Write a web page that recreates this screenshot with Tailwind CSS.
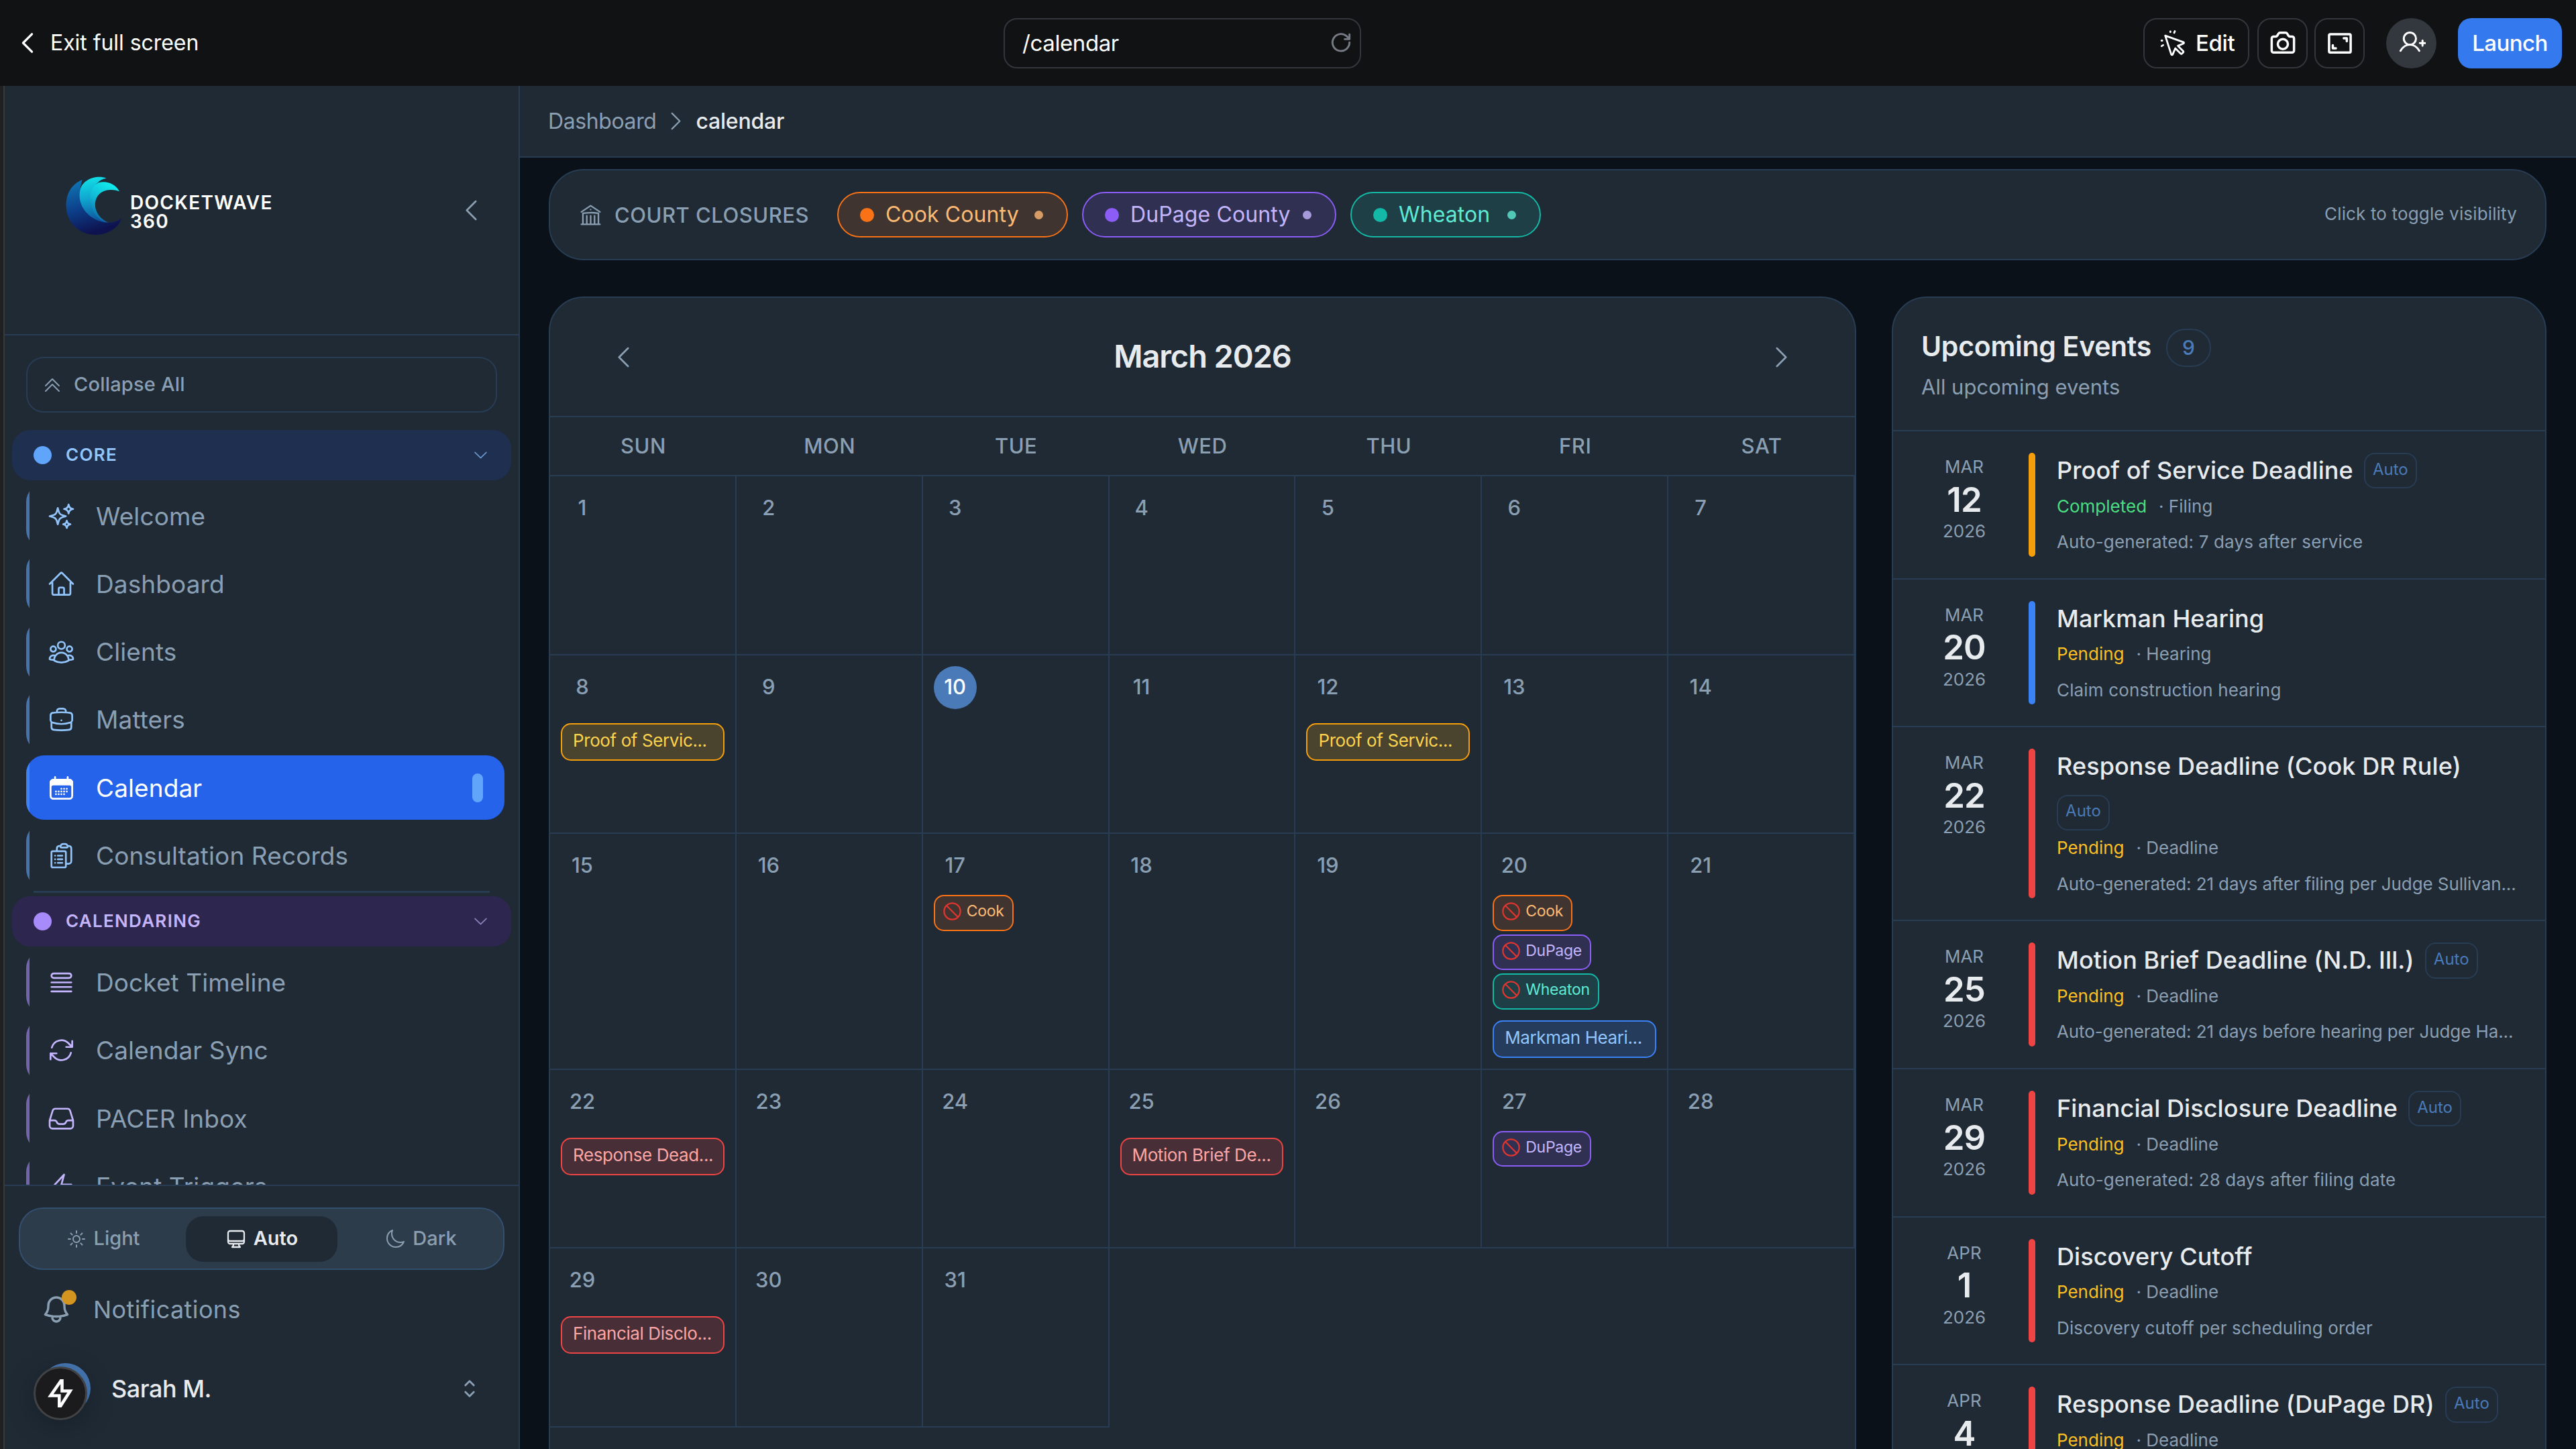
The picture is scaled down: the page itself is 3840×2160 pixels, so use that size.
<!DOCTYPE html>
<html lang="en">
<head>
    <meta charset="UTF-8">
    <meta name="viewport" content="width=device-width, initial-scale=1.0">
    <title>DocketWave 360 - Calendar</title>
    <script src="https://cdn.jsdelivr.net/npm/@tailwindcss/browser@4"></script>
</head>
<body class="w-[3840px] h-[2160px] overflow-hidden flex flex-col bg-[#101213] font-['Inter','DejaVu_Sans',sans-serif] text-[#e8ebee] leading-none">

    <!-- Icon set -->
    <svg class="hidden">
        <symbol id="i-left" viewBox="0 0 24 24"><path d="M15.75 19.5 8.25 12l7.5-7.5"/></symbol>
        <symbol id="i-right" viewBox="0 0 24 24"><path d="m8.25 4.5 7.5 7.5-7.5 7.5"/></symbol>
        <symbol id="i-down" viewBox="0 0 24 24"><path d="m19.5 8.25-7.5 7.5-7.5-7.5"/></symbol>
        <symbol id="i-double-up" viewBox="0 0 24 24"><path d="m4.5 18.75 7.5-7.5 7.5 7.5M4.5 12.75l7.5-7.5 7.5 7.5"/></symbol>
        <symbol id="i-updown" viewBox="0 0 24 24"><path d="M8.25 15 12 18.75 15.75 15m-7.5-6L12 5.25 15.75 9"/></symbol>
        <symbol id="i-sparkles" viewBox="0 0 24 24"><path d="M9.813 15.904 9 18.75l-.813-2.846a4.5 4.5 0 0 0-3.09-3.09L2.25 12l2.846-.813a4.5 4.5 0 0 0 3.09-3.09L9 5.25l.813 2.846a4.5 4.5 0 0 0 3.09 3.09L15.75 12l-2.846.813a4.5 4.5 0 0 0-3.09 3.09ZM18.259 8.715 18 9.75l-.259-1.035a3.375 3.375 0 0 0-2.455-2.456L14.25 6l1.036-.259a3.375 3.375 0 0 0 2.455-2.456L18 2.25l.259 1.035a3.375 3.375 0 0 0 2.456 2.456L21.75 6l-1.035.259a3.375 3.375 0 0 0-2.456 2.456ZM16.894 20.567 16.5 21.75l-.394-1.183a2.25 2.25 0 0 0-1.423-1.423L13.5 18.75l1.183-.394a2.25 2.25 0 0 0 1.423-1.423l.394-1.183.394 1.183a2.25 2.25 0 0 0 1.423 1.423l1.183.394-1.183.394a2.25 2.25 0 0 0-1.423 1.423Z"/></symbol>
        <symbol id="i-home" viewBox="0 0 24 24"><path d="m2.25 12 8.954-8.955c.44-.439 1.152-.439 1.591 0L21.75 12M4.5 9.75v10.125c0 .621.504 1.125 1.125 1.125H9.75v-4.875c0-.621.504-1.125 1.125-1.125h2.25c.621 0 1.125.504 1.125 1.125V21h4.125c.621 0 1.125-.504 1.125-1.125V9.75M8.25 21h8.25"/></symbol>
        <symbol id="i-group" viewBox="0 0 24 24"><path d="M18 18.72a9.094 9.094 0 0 0 3.741-.479 3 3 0 0 0-4.682-2.72m.94 3.198.001.031c0 .225-.012.447-.037.666A11.944 11.944 0 0 1 12 21c-2.17 0-4.207-.576-5.963-1.584A6.062 6.062 0 0 1 6 18.719m12 0a5.971 5.971 0 0 0-.941-3.197m0 0A5.995 5.995 0 0 0 12 12.75a5.995 5.995 0 0 0-5.058 2.772m0 0a3 3 0 0 0-4.681 2.72 8.986 8.986 0 0 0 3.74.477m.94-3.197a5.971 5.971 0 0 0-.94 3.197M15 6.75a3 3 0 1 1-6 0 3 3 0 0 1 6 0Zm6 3a2.25 2.25 0 1 1-4.5 0 2.25 2.25 0 0 1 4.5 0Zm-13.5 0a2.25 2.25 0 1 1-4.5 0 2.25 2.25 0 0 1 4.5 0Z"/></symbol>
        <symbol id="i-briefcase" viewBox="0 0 24 24"><path d="M20.25 14.15v4.25c0 1.094-.787 2.036-1.872 2.18-2.087.277-4.216.42-6.378.42s-4.291-.143-6.378-.42c-1.085-.144-1.872-1.086-1.872-2.18v-4.25m16.5 0a2.18 2.18 0 0 0 .75-1.661V8.706c0-1.081-.768-2.015-1.837-2.175a48.114 48.114 0 0 0-3.413-.387m4.5 8.006c-.194.165-.42.295-.673.38A23.978 23.978 0 0 1 12 15.75c-2.648 0-5.195-.429-7.577-1.22a2.016 2.016 0 0 1-.673-.38m0 0A2.18 2.18 0 0 1 3 12.489V8.706c0-1.081.768-2.015 1.837-2.175a48.111 48.111 0 0 1 3.413-.387m7.5 0V5.25A2.25 2.25 0 0 0 13.5 3h-3a2.25 2.25 0 0 0-2.25 2.25v.894m7.5 0a48.667 48.667 0 0 0-7.5 0M12 12.75h.008v.008H12v-.008Z"/></symbol>
        <symbol id="i-calendar" viewBox="0 0 24 24"><path fill="currentColor" d="M3 9.75V7.5a2.25 2.25 0 0 1 2.25-2.25h13.5A2.25 2.25 0 0 1 21 7.5v2.25L18.75 9H5.25Z"/><path d="M6.75 3v2.25M17.25 3v2.25M3 18.75V7.5a2.25 2.25 0 0 1 2.25-2.25h13.5A2.25 2.25 0 0 1 21 7.5v11.25m-18 0A2.25 2.25 0 0 0 5.25 21h13.5A2.25 2.25 0 0 0 21 18.75m-18 0v-7.5A2.25 2.25 0 0 1 5.25 9h13.5A2.25 2.25 0 0 1 21 11.25v7.5m-9-6h.008v.008H12v-.008ZM12 15h.008v.008H12V15Zm0 2.25h.008v.008H12v-.008ZM9.75 15h.008v.008H9.75V15Zm0 2.25h.008v.008H9.75v-.008ZM7.5 15h.008v.008H7.5V15Zm0 2.25h.008v.008H7.5v-.008Zm6.75-4.5h.008v.008h-.008v-.008Zm0 2.25h.008v.008h-.008V15Zm0 2.25h.008v.008h-.008v-.008Zm2.25-4.5h.008v.008H16.5v-.008Zm0 2.25h.008v.008H16.5V15Z"/></symbol>
        <symbol id="i-clipboard" viewBox="0 0 24 24"><path d="M9 12h3.75M9 15h3.75M9 18h3.75m3 .75H18a2.25 2.25 0 0 0 2.25-2.25V6.108c0-1.135-.845-2.098-1.976-2.192a48.424 48.424 0 0 0-1.123-.08m-5.801 0c-.065.21-.1.433-.1.664 0 .414.336.75.75.75h4.5a.75.75 0 0 0 .75-.75 2.25 2.25 0 0 0-.1-.664m-5.8 0A2.251 2.251 0 0 1 13.5 2.25H15c1.012 0 1.867.668 2.15 1.586m-5.8 0c-.376.023-.75.05-1.124.08C9.095 4.01 8.25 4.973 8.25 6.108V8.25m0 0H4.875c-.621 0-1.125.504-1.125 1.125v11.25c0 .621.504 1.125 1.125 1.125h9.75c.621 0 1.125-.504 1.125-1.125V9.375c0-.621-.504-1.125-1.125-1.125H8.25ZM6.75 12h.008v.008H6.75V12Zm0 3h.008v.008H6.75V15Zm0 3h.008v.008H6.75V18Z"/></symbol>
        <symbol id="i-queue" viewBox="0 0 24 24"><path d="M3.75 12h16.5m-16.5 3.75h16.5M3.75 19.5h16.5M5.625 4.5h12.75a1.875 1.875 0 0 1 0 3.75H5.625a1.875 1.875 0 0 1 0-3.75Z"/></symbol>
        <symbol id="i-sync" viewBox="0 0 24 24"><path d="M16.023 9.348h4.992v-.001M2.985 19.644v-4.992m0 0h4.992m-4.993 0 3.181 3.183a8.25 8.25 0 0 0 13.803-3.7M4.031 9.865a8.25 8.25 0 0 1 13.803-3.7l3.181 3.182m0-4.991v4.99"/></symbol>
        <symbol id="i-inbox" viewBox="0 0 24 24"><path d="M2.25 13.5h3.86a2.25 2.25 0 0 1 2.012 1.244l.256.512a2.25 2.25 0 0 0 2.013 1.244h3.218a2.25 2.25 0 0 0 2.013-1.244l.256-.512a2.25 2.25 0 0 1 2.013-1.244h3.859m-19.5.338V18a2.25 2.25 0 0 0 2.25 2.25h15A2.25 2.25 0 0 0 21.75 18v-4.162c0-.224-.034-.447-.1-.661L19.24 5.338a2.25 2.25 0 0 0-2.15-1.588H6.911a2.25 2.25 0 0 0-2.15 1.588L2.35 13.177a2.25 2.25 0 0 0-.1.661Z"/></symbol>
        <symbol id="i-bolt" viewBox="0 0 24 24"><path d="m3.75 13.5 10.5-11.25L12 10.5h8.25L9.75 21.75 12 13.5H3.75Z"/></symbol>
        <symbol id="i-bell" viewBox="0 0 24 24"><path d="M14.857 17.082a23.848 23.848 0 0 0 5.454-1.31A8.967 8.967 0 0 1 18 9.75V9A6 6 0 0 0 6 9v.75a8.967 8.967 0 0 1-2.312 6.022c1.733.64 3.56 1.085 5.455 1.31m5.714 0a24.255 24.255 0 0 1-5.714 0m5.714 0a3 3 0 1 1-5.714 0"/></symbol>
        <symbol id="i-sun" viewBox="0 0 24 24"><path d="M12 3v2.25m6.364.386-1.591 1.591M21 12h-2.25m-.386 6.364-1.591-1.591M12 18.75V21m-4.773-4.227-1.591 1.591M5.25 12H3m4.227-4.773L5.636 5.636M15.75 12a3.75 3.75 0 1 1-7.5 0 3.75 3.75 0 0 1 7.5 0Z"/></symbol>
        <symbol id="i-desktop" viewBox="0 0 24 24"><path d="M9 17.25v1.007a3 3 0 0 1-.879 2.122L7.5 21h9l-.621-.621A3 3 0 0 1 15 18.257V17.25m6-12V15a2.25 2.25 0 0 1-2.25 2.25H5.25A2.25 2.25 0 0 1 3 15V5.25m18 0A2.25 2.25 0 0 0 18.75 3H5.25A2.25 2.25 0 0 0 3 5.25m18 0V12a2.25 2.25 0 0 1-2.25 2.25H5.25A2.25 2.25 0 0 1 3 12V5.25"/></symbol>
        <symbol id="i-moon" viewBox="0 0 24 24"><path d="M21.752 15.002A9.72 9.72 0 0 1 18 15.75c-5.385 0-9.75-4.365-9.75-9.75 0-1.33.266-2.597.748-3.752A9.753 9.753 0 0 0 3 11.25C3 16.635 7.365 21 12.75 21a9.753 9.753 0 0 0 9.002-5.998Z"/></symbol>
        <symbol id="i-library" viewBox="0 0 24 24"><path d="M12 21v-8.25M15.75 21v-8.25M8.25 21v-8.25M3 9l9-6 9 6m-1.5 12V10.332A48.36 48.36 0 0 0 12 9.75c-2.551 0-5.056.2-7.5.582V21M3 21h18M12 6.75h.008v.008H12V6.75Z"/></symbol>
    </svg>

    <!-- Top bar -->
    <header class="h-[128px] shrink-0 flex items-center justify-between bg-[#101213] text-white pl-5 pr-[21px]">
        <div class="w-[1476px] flex items-center gap-[13px]">
            <svg class="size-[42px] fill-none stroke-current stroke-[1.9]" stroke-linecap="round" stroke-linejoin="round"><use href="#i-left"/></svg>
            <span class="text-[32px] tracking-[-0.05px]">Exit full screen</span>
        </div>
        <div class="w-[533px] h-[75px] flex items-center justify-between rounded-[20px] border-2 border-[#33373d] pl-[26px] pr-[12px]">
            <span class="text-[33px] tracking-[-0.4px]">/calendar</span>
            <svg class="size-[32px] fill-none stroke-[#757b83] stroke-[2.2]" viewBox="0 0 24 24" stroke-linecap="round" stroke-linejoin="round"><path d="M21.5 11.5a9.5 9.5 0 1 1-3.2-7.100L21.3 7.500M21.500 2.500v5.300h-5.300"/></svg>
        </div>
        <div class="flex-1 flex items-center justify-end">
            <button class="w-[158px] h-[75px] flex items-center gap-[14px] rounded-[20px] border-2 border-[#33373d] pl-[22px]">
                <svg class="size-[40px] fill-none stroke-current stroke-[1.7]" viewBox="0 0 24 24" stroke-linecap="round" stroke-linejoin="round"><path d="M5.2 5.500 21.500 11.300c.6.300.5 1.100-.100 1.300l-4.900 2 4.600 4.600c.5.500.5.900.1 1.300l-1 1c-.5.400-.9.400-1.300 0l-4.700-4.700-2.300 5.500c-.3.600-1.100.6-1.300 0L5.200 5.500ZM9.800 2.300v-.6M13.200 2.900l.600-1.400M1.900 9.900h.6M2 14.800l1.300-.8"/></svg>
                <span class="text-[33px] font-medium tracking-[-0.4px]">Edit</span>
            </button>
            <button class="ml-3 size-[75px] flex items-center justify-center rounded-[20px] border-2 border-[#33373d]">
                <svg class="size-[42px] fill-none stroke-current stroke-2" viewBox="0 0 24 24" stroke-linecap="round" stroke-linejoin="round"><path d="M2.500 8.300c0-1 .7-1.800 1.700-1.800h1.700c.6 0 1.100-.3 1.400-.8l.9-1.500c.3-.5.9-.9 1.500-.9h4.600c.6 0 1.200.400 1.500.9l.9 1.500c.3.500.8.8 1.400.8h1.700c1 0 1.700.8 1.700 1.800V18.500c0 1-.8 1.700-1.700 1.700H4.200c-1 0-1.700-.8-1.700-1.700V8.300Z"/><circle cx="12" cy="13" r="4.300"/></svg>
            </button>
            <button class="ml-[10px] size-[75px] flex items-center justify-center rounded-[20px] border-2 border-[#33373d]">
                <svg class="size-[42px] fill-none stroke-current stroke-2" viewBox="0 0 24 24" stroke-linecap="round" stroke-linejoin="round"><rect x="2.800" y="4.500" width="18.400" height="15.600" rx="1"/><path d="M15.300 8h2.600v2.600M6 14v2.600h2.600"/></svg>
            </button>
            <button class="ml-8 size-[75px] flex items-center justify-center rounded-full bg-[#33373e]">
                <svg class="size-[42px] fill-none stroke-current stroke-[1.7]" viewBox="0 0 24 24" stroke-linecap="round" stroke-linejoin="round"><circle cx="10.500" cy="8.300" r="5.200"/><path d="M2.500 18.700c2-3.400 4.700-5.200 8-5.200s6 1.800 8 5.200M19 12.200h4.500M21.250 9.950v4.500"/></svg>
            </button>
            <button class="ml-8 w-[155px] h-[75px] rounded-[20px] bg-[#3579ee] text-[33px] font-medium tracking-[-0.6px]">Launch</button>
        </div>
    </header>

    <div class="flex-1 min-h-0 flex">
        <div class="w-[7px] bg-[#1e2021] border-r-2 border-[#38393b]"></div>

        <!-- Sidebar -->
        <aside class="w-[768px] shrink-0 flex flex-col bg-[#1f2a35] border-r-2 border-[#283c54] text-[#8b9fb2]">
            <div class="h-[372px] shrink-0 flex items-start justify-between border-b-2 border-[#283c54] pt-[134px] pl-[90px] pr-[49px]">
                <div class="flex items-start gap-[12px]">
                    <svg class="w-[85px] h-[89px]" viewBox="50 64 255 267">
                        <defs>
                            <linearGradient id="deep" x1="0" y1="0" x2="0.3" y2="1"><stop offset="0" stop-color="#0f7cb8"/><stop offset="0.55" stop-color="#0c3f8a"/><stop offset="1" stop-color="#0e1350"/></linearGradient>
                            <linearGradient id="mid" x1="0.5" y1="0" x2="0.6" y2="1"><stop offset="0" stop-color="#12dfe6"/><stop offset="0.45" stop-color="#10a5cf"/><stop offset="1" stop-color="#0d4f98"/></linearGradient>
                            <linearGradient id="crest" x1="0.7" y1="0" x2="0.3" y2="1"><stop offset="0" stop-color="#0ff0ee"/><stop offset="0.5" stop-color="#12b9d6"/><stop offset="1" stop-color="#0c63a8"/></linearGradient>
                        </defs>
                        <path fill="url(#deep)" d="M127 82C80 100 52 145 55 205c5 80 70 125 135 123 60-3 105-38 112-76-32 33-87 23-127-2-55-35-70-100-48-168Z"/>
                        <path fill="url(#mid)" d="M235 75c-45-17-105 5-117 50-18 75 42 140 117 149-35-20-60-60-60-110 0-30 5-60 23-70 5-8 20-16 37-19Z"/>
                        <path fill="url(#crest)" d="M293 134c-18-34-58-49-93-39-40 20-50 75-25 125 15 30 40 50 70 54-55-24-70-74-55-109 15-35 60-47 103-31Z"/>
                    </svg>
                    <div class="pt-[26px] text-[28px] leading-[28px] font-semibold text-white tracking-[1.3px]">DOCKETWAVE<br>360</div>
                </div>
                <svg class="mt-[30px] size-[43px] fill-none stroke-current stroke-[1.5]" stroke-linecap="round" stroke-linejoin="round"><use href="#i-left"/></svg>
            </div>

            <nav class="flex-1 min-h-0 overflow-hidden">
                <button class="mt-8 ml-8 w-[702px] h-[83px] flex items-center gap-4 rounded-[26px] border-2 border-[#283c54] pl-[21px]">
                    <svg class="size-8 fill-none stroke-current stroke-[1.5]" stroke-linecap="round" stroke-linejoin="round"><use href="#i-double-up"/></svg>
                    <span class="pb-[3px] text-[29px] font-medium tracking-[0.2px]">Collapse All</span>
                </button>

                <div class="mt-[26px] ml-[11px] w-[744px] h-[75px] flex items-center rounded-[27px] bg-[#1f2f50] pl-8 pr-8 text-[#93c5fd]">
                    <span class="size-[27px] rounded-full bg-[#60a5fa]"></span>
                    <span class="ml-[21px] pb-[2px] flex-1 text-[26px] font-semibold tracking-[1.3px]">CORE</span>
                    <svg class="size-[27px] fill-none stroke-[#6a97cb] stroke-[1.5]" stroke-linecap="round" stroke-linejoin="round"><use href="#i-down"/></svg>
                </div>
                <div id="core" class="mt-[5px] ml-8 mr-[21px] flex flex-col gap-[5.3px]"></div>

                <div class="mt-[5px] ml-[43px] w-[680px] h-[3px] bg-[#283c54]"></div>
                <div class="mt-[5px] ml-[11px] w-[744px] h-[75px] flex items-center rounded-[27px] bg-[#2d274f] pl-8 pr-8 text-[#c4b5fd]">
                    <span class="size-[27px] rounded-full bg-[#a78bfa]"></span>
                    <span class="ml-[21px] pb-[2px] flex-1 text-[26px] font-semibold tracking-[1.3px]">CALENDARING</span>
                    <svg class="size-[27px] fill-none stroke-[#8f83bf] stroke-[1.5]" stroke-linecap="round" stroke-linejoin="round"><use href="#i-down"/></svg>
                </div>
                <div id="calendaring" class="mt-[5px] ml-8 mr-[21px] flex flex-col gap-[5.3px]"></div>
            </nav>

            <div class="h-[394px] shrink-0 border-t-2 border-[#283c54] pt-8 pl-[21px]">
                <div class="w-[724px] h-[93px] flex items-center justify-between rounded-[36px] bg-[#2d3c4b] border-2 border-[#334f6e] p-[10px] text-[29px] font-medium">
                    <div class="w-[226px] flex items-center justify-center gap-[10px]">
                        <svg class="size-8 fill-none stroke-current stroke-[1.5]" stroke-linecap="round" stroke-linejoin="round"><use href="#i-sun"/></svg><span class="pb-[2px]">Light</span>
                    </div>
                    <div class="w-[226px] h-[68px] flex items-center justify-center gap-[10px] rounded-[26px] bg-[#1f2a35] text-[#e8ebee] font-semibold">
                        <svg class="size-8 fill-none stroke-current stroke-[1.7]" stroke-linecap="round" stroke-linejoin="round"><use href="#i-desktop"/></svg><span class="pb-[2px]">Auto</span>
                    </div>
                    <div class="w-[226px] flex items-center justify-center gap-[10px]">
                        <svg class="size-8 fill-none stroke-current stroke-[1.5]" stroke-linecap="round" stroke-linejoin="round"><use href="#i-moon"/></svg><span class="pb-[2px]">Dark</span>
                    </div>
                </div>
                <div class="mt-[32px] ml-8 h-[53px] flex items-center gap-[31px]">
                    <div class="relative">
                        <svg class="size-[48px] fill-none stroke-current stroke-[1.7]" stroke-linecap="round" stroke-linejoin="round"><use href="#i-bell"/></svg>
                        <span class="absolute left-[32px] -top-[5px] size-[22px] rounded-full bg-[#d49420]"></span>
                    </div>
                    <span class="text-[36px] tracking-[0.4px]">Notifications</span>
                </div>
                <div class="mt-[54px] ml-[32px] h-[75px] flex items-center">
                    <div class="relative size-[75px] rounded-full bg-[#4677b3]">
                        <div class="absolute -left-[10px] top-[5px] size-[80px] flex items-center justify-center rounded-full bg-[#1b1b1d] border-[3px] border-[#414244] text-white shadow-[0_8px_40px_rgba(0,0,0,0.25)]">
                            <svg class="size-[50px] fill-none stroke-current stroke-[2.2]" viewBox="0 0 24 24"><path d="M12.4 3 5 13.700h6.200v7.300h1L19 10.300h-5.800V3Z"/></svg>
                        </div>
                    </div>
                    <span class="ml-[31px] flex-1 text-[36px] font-medium tracking-[-0.5px] text-[#e8ebee]">Sarah M.</span>
                    <svg class="mr-[53px] size-[40px] fill-none stroke-current stroke-[1.7]" stroke-linecap="round" stroke-linejoin="round"><use href="#i-updown"/></svg>
                </div>
            </div>
        </aside>

        <!-- Page -->
        <main class="flex-1 min-w-0 flex flex-col bg-[#0a1118]">
            <div class="h-[107px] shrink-0 flex items-center gap-[11px] bg-[#1f2a35] border-b-2 border-[#283c54] pl-[42px] text-[32px]">
                <span class="text-[#8b9fb2] tracking-[-0.4px]">Dashboard</span>
                <svg class="size-[37px] fill-none stroke-[#8b9fb2] stroke-[1.5]" stroke-linecap="round" stroke-linejoin="round"><use href="#i-right"/></svg>
                <span class="font-medium tracking-[-0.2px]">calendar</span>
            </div>

            <div class="mt-[17px] ml-[43px] mr-[44px] h-[136px] shrink-0 flex items-center rounded-[52px] bg-[#1f2a35] border-2 border-[#283c54] pl-[42px] pr-[42px]">
                <svg class="size-[37px] fill-none stroke-[#8b9fb2] stroke-[1.5]" stroke-linecap="round" stroke-linejoin="round"><use href="#i-library"/></svg>
                <span class="ml-[17px] w-[332px] text-[31px] font-medium tracking-[0.5px] text-[#8b9fb2] whitespace-nowrap">COURT CLOSURES</span>
                <div class="flex-1 flex gap-[21px] text-[32px] tracking-[0.1px]">
                    <button class="w-[344px] h-[68px] flex items-center rounded-[34px] bg-[#3f3430] border-2 border-[#f97316] pl-8 text-[#fdba74]">
                        <span class="size-[21px] rounded-full bg-[#f97316]"></span><span class="ml-[17px]">Cook County</span><span class="ml-auto mr-[35px] size-[13px] rounded-full bg-[#d79c66]"></span>
                    </button>
                    <button class="w-[379px] h-[68px] flex items-center rounded-[34px] bg-[#303152] border-2 border-[#8b5cf6] pl-8 text-[#c4b5fd]">
                        <span class="size-[21px] rounded-full bg-[#8b5cf6]"></span><span class="ml-[17px]">DuPage County</span><span class="ml-auto mr-[35px] size-[13px] rounded-full bg-[#a69adb]"></span>
                    </button>
                    <button class="w-[284px] h-[68px] flex items-center rounded-[34px] bg-[#1e3f45] border-2 border-[#14b8a6] pl-8 text-[#5eead4]">
                        <span class="size-[21px] rounded-full bg-[#14b8a6]"></span><span class="ml-[17px]">Wheaton</span><span class="ml-auto mr-[35px] size-[13px] rounded-full bg-[#52c7b8]"></span>
                    </button>
                </div>
                <span class="pb-[2px] text-[26px] tracking-[0.15px] text-[#8b9fb2]">Click to toggle visibility</span>
            </div>

            <div class="mt-[54px] ml-[43px] mr-[44px] flex-1 min-h-0 flex gap-[53px]">
                <!-- Month grid -->
                <section class="w-[1949px] h-[1800px] rounded-[52px] bg-[#1f2a35] border-2 border-[#283c54]">
                    <div class="h-[178px] flex items-center justify-between border-b-2 border-[#283c54] px-[88px]">
                        <svg class="size-[43px] fill-none stroke-[#8b9fb2] stroke-[1.5]" stroke-linecap="round" stroke-linejoin="round"><use href="#i-left"/></svg>
                        <h2 class="pb-[4px] text-[47px] font-semibold tracking-[-1.1px]">March 2026</h2>
                        <svg class="size-[43px] fill-none stroke-[#8b9fb2] stroke-[1.5]" stroke-linecap="round" stroke-linejoin="round"><use href="#i-right"/></svg>
                    </div>
                    <div id="weekdays" class="h-[88px] grid grid-cols-7 items-center border-b-2 border-[#283c54] pb-[2px] text-center text-[31px] font-medium tracking-[0.5px] text-[#8b9fb2]"></div>
                    <div id="days" class="grid grid-cols-7 auto-rows-[minmax(266.5px,auto)]"></div>
                </section>

                <!-- Upcoming events -->
                <section class="flex-1 h-[1800px] rounded-[52px] bg-[#1f2a35] border-2 border-[#283c54] overflow-hidden">
                    <div class="h-[199px] border-b-2 border-[#283c54] pt-[46px] pl-[42px]">
                        <div class="h-[57px] flex items-center gap-[22px]">
                            <h2 class="pb-[4px] text-[41px] font-semibold tracking-[-0.3px]">Upcoming Events</h2>
                            <span class="w-[67px] h-[57px] flex items-center justify-center rounded-full border-2 border-[#283c54] pb-[2px] text-[30px] font-medium text-[#4a7ab8]">9</span>
                        </div>
                        <p class="mt-[11px] text-[31px] leading-[38px] text-[#8b9fb2]">All upcoming events</p>
                    </div>
                    <div id="events"></div>
                </section>
            </div>
        </main>
    </div>

    <script>
        // Sidebar links
        const core = [
            ['sparkles', 'Welcome'], ['home', 'Dashboard'], ['group', 'Clients'], ['briefcase', 'Matters'],
            ['calendar', 'Calendar', true], ['clipboard', 'Consultation Records']
        ];
        const calendaring = [['queue', 'Docket Timeline'], ['sync', 'Calendar Sync'], ['inbox', 'PACER Inbox'], ['bolt', 'Event Triggers']];

        const link = ([icon, label, active], stripe, tint) => `
            <a class="h-24 shrink-0 flex items-center rounded-[27px] overflow-hidden pr-8 ${active ? 'bg-[#2563eb] text-white' : ''}">
                <span class="w-[5px] h-full ${active ? 'bg-[#3f82f2]' : stripe}"></span>
                <svg class="ml-[26px] size-[43px] fill-none stroke-current stroke-[1.5] ${active ? 'text-white' : tint}" stroke-linecap="round" stroke-linejoin="round"><use href="#i-${icon}"/></svg>
                <span class="ml-[30px] flex-1 text-[37px] tracking-[0.1px] whitespace-nowrap">${label}</span>
                ${active ? '<span class="w-4 h-[43px] rounded-full bg-[#60a5fa]"></span>' : ''}
            </a>`;
        document.getElementById('core').innerHTML = core.map(l => link(l, 'bg-[#4673aa]', 'text-[#93c5fd]')).join('');
        document.getElementById('calendaring').innerHTML = calendaring.map(l => link(l, 'bg-[#7563ab]', 'text-[#c4b5fd]')).join('');

        // Month
        document.getElementById('weekdays').innerHTML = ['SUN', 'MON', 'TUE', 'WED', 'THU', 'FRI', 'SAT'].map(d => `<span>${d}</span>`).join('');

        const colors = {
            orange: 'bg-[#3f3430] border-[#f97316] text-[#fdba74]',
            purple: 'bg-[#303152] border-[#8b5cf6] text-[#c4b5fd]',
            teal: 'bg-[#1e3f45] border-[#14b8a6] text-[#5eead4]',
            amber: 'bg-[#4a432e] border-[#f59e0b] text-[#fcd34d]',
            blue: 'bg-[#253c5c] border-[#3b82f6] text-[#93c5fd]',
            red: 'bg-[#482f37] border-[#ef4444] text-[#fca5a5]'
        };
        const closures = {
            17: [['Cook', 'orange']],
            20: [['Cook', 'orange'], ['DuPage', 'purple'], ['Wheaton', 'teal']],
            27: [['DuPage', 'purple']]
        };
        const entries = {
            8: ['Proof of Servic...', 'amber'], 12: ['Proof of Servic...', 'amber'], 20: ['Markman Heari...', 'blue'],
            22: ['Response Dead...', 'red'], 25: ['Motion Brief De...', 'red'], 29: ['Financial Disclo...', 'red']
        };
        const ban = '<svg class="size-[27px] fill-none stroke-[#e0352f] stroke-2" viewBox="0 0 24 24"><circle cx="12" cy="12" r="10.8"/><path d="m4.5 4.5 15 15"/></svg>';

        let days = '';
        for (let d = 1; d <= 31; d++) {
            const shut = (closures[d] || []).map(([t, c]) => `
                <div class="h-[53.5px] flex items-center gap-[8px] rounded-[15px] border-2 px-3 pb-[4px] text-[23px] tracking-[-0.3px] ${colors[c]}">${ban}${t}</div>`).join('');
            const e = entries[d];
            days += `
                <div class="border-r-2 border-b-2 border-[#283c54] p-4 text-[#8b9fb2]">
                    <div class="size-16 flex items-center justify-center rounded-full pb-[3px] text-[31px] font-medium ${d === 10 ? 'bg-[#4a7ab8] text-white' : ''}">${d}</div>
                    ${shut && `<div class="mt-[11px] flex flex-col items-start gap-[5px]">${shut}</div>`}
                    ${e ? `<div class="${shut ? 'mt-4' : 'mt-[21px]'} h-[56px] flex items-center rounded-[15px] border-2 pl-4 pb-[4px] text-[26px] tracking-[-0.4px] whitespace-nowrap ${colors[e[1]]}">${e[0]}</div>` : ''}
                </div>`;
        }
        document.getElementById('days').innerHTML = days;

        // Upcoming list
        const events = [
            ['MAR', 12, 'Proof of Service Deadline', true, 'Completed', 'Filing', 'Auto-generated: 7 days after service', 'bg-[#f59e0b]'],
            ['MAR', 20, 'Markman Hearing', false, 'Pending', 'Hearing', 'Claim construction hearing', 'bg-[#3b82f6]'],
            ['MAR', 22, 'Response Deadline (Cook DR Rule)', true, 'Pending', 'Deadline', 'Auto-generated: 21 days after filing per Judge Sullivan...', 'bg-[#ef4444]'],
            ['MAR', 25, 'Motion Brief Deadline (N.D. Ill.)', true, 'Pending', 'Deadline', 'Auto-generated: 21 days before hearing per Judge Ha...', 'bg-[#ef4444]'],
            ['MAR', 29, 'Financial Disclosure Deadline', true, 'Pending', 'Deadline', 'Auto-generated: 28 days after filing date', 'bg-[#ef4444]'],
            ['APR', 1, 'Discovery Cutoff', false, 'Pending', 'Deadline', 'Discovery cutoff per scheduling order', 'bg-[#ef4444]'],
            ['APR', 4, 'Response Deadline (DuPage DR)', true, 'Pending', 'Deadline', 'Auto-generated: 30 days after service', 'bg-[#ef4444]']
        ];
        document.getElementById('events').innerHTML = events.map(([m, d, title, auto, status, kind, text, bar]) => `
            <div class="flex border-b-2 border-[#283c54] pt-8 pb-8 pl-[42px] pr-[43px] text-[26px] text-[#8b9fb2]">
                <div class="w-32 shrink-0 text-center leading-[42.67px]">
                    <div>${m}</div>
                    <div class="text-[51px] leading-[53.33px] font-semibold tracking-[-1px] text-[#e8ebee]">${d}</div>
                    <div>2026</div>
                </div>
                <div class="ml-8 mr-[32px] w-[10px] shrink-0 rounded-full ${bar}"></div>
                <div class="flex-1 min-w-0">
                    <div class="flex flex-wrap items-center gap-x-4 gap-y-[15px]">
                        <span class="text-[36px] leading-[53.33px] font-medium tracking-[0.1px] text-[#e8ebee] whitespace-nowrap">${title}</span>
                        ${auto ? '<span class="w-[79px] h-[53.33px] flex items-center justify-center rounded-[16px] border-2 border-[#283c54] pb-[4px] text-[24px] text-[#4a7ab8]">Auto</span>' : ''}
                    </div>
                    <div class="mt-[5.33px] leading-[42.67px]"><span class="mr-[18px] ${status === 'Completed' ? 'text-[#4ade80]' : 'text-[#fbbf24]'}">${status}</span>· ${kind}</div>
                    <div class="mt-[10.67px] leading-[42.67px] whitespace-nowrap ${text.endsWith('...') ? 'tracking-[-0.1px]' : 'tracking-[0.15px]'}">${text}</div>
                </div>
            </div>`).join('');
    </script>
</body>
</html>
